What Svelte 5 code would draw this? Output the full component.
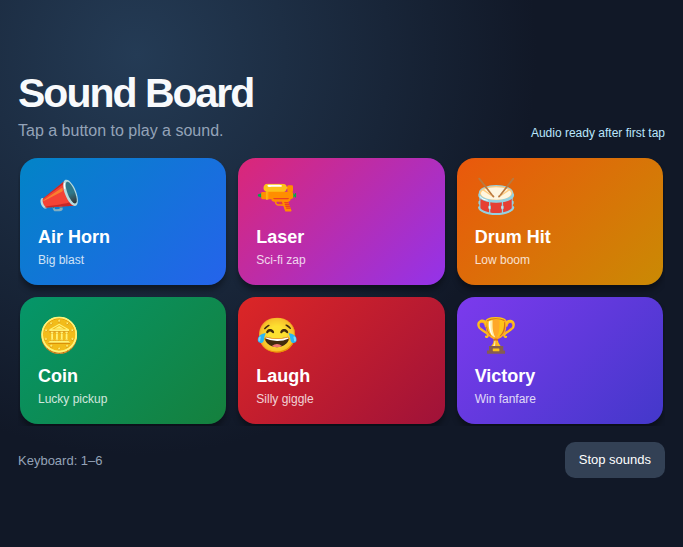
<script lang="ts">
	const sounds = [
		{ id: 'horn', emoji: '📣', name: 'Air Horn', hint: 'Big blast', from: '#0284c7', to: '#2563eb' },
		{ id: 'laser', emoji: '🔫', name: 'Laser', hint: 'Sci-fi zap', from: '#db2777', to: '#9333ea' },
		{ id: 'drum', emoji: '🥁', name: 'Drum Hit', hint: 'Low boom', from: '#ea580c', to: '#ca8a04' },
		{ id: 'coin', emoji: '🪙', name: 'Coin', hint: 'Lucky pickup', from: '#059669', to: '#15803d' },
		{ id: 'laugh', emoji: '😂', name: 'Laugh', hint: 'Silly giggle', from: '#dc2626', to: '#9f1239' },
		{ id: 'victory', emoji: '🏆', name: 'Victory', hint: 'Win fanfare', from: '#7c3aed', to: '#4338ca' }
	];

	// Notes are [frequency, start, length]
	const notes: Record<string, [number, number, number][]> = {
		horn: [[220, 0, 0.6], [277, 0, 0.6]],
		laser: [[1200, 0, 0.08], [700, 0.08, 0.08], [300, 0.16, 0.1]],
		drum: [[90, 0, 0.25]],
		coin: [[988, 0, 0.08], [1319, 0.08, 0.3]],
		laugh: [[520, 0, 0.1], [460, 0.15, 0.1], [400, 0.3, 0.1]],
		victory: [[523, 0, 0.12], [659, 0.14, 0.12], [784, 0.28, 0.4]]
	};

	let status = $state('Audio ready after first tap');
	let audio: AudioContext | null = null;
	let playing: OscillatorNode[] = [];

	function play(sound: (typeof sounds)[number]) {
		audio ??= new AudioContext();
		for (const [frequency, start, length] of notes[sound.id]) {
			const osc = audio.createOscillator();
			const gain = audio.createGain();
			osc.frequency.value = frequency;
			gain.gain.value = 0.15;
			osc.connect(gain).connect(audio.destination);
			osc.start(audio.currentTime + start);
			osc.stop(audio.currentTime + start + length);
			playing.push(osc);
		}
		status = `Playing ${sound.name}`;
	}

	function stopAll() {
		playing.forEach((osc) => osc.stop());
		playing = [];
		status = 'Stopped';
	}

	function handleKey(event: KeyboardEvent) {
		const sound = sounds[Number(event.key) - 1];
		if (sound && !event.repeat) {
			play(sound);
		}
	}
</script>

<svelte:window onkeydown={handleKey} />

<main>
	<div class="board">
		<header>
			<div>
				<h1>Sound Board</h1>
				<p class="subtitle">Tap a button to play a sound.</p>
			</div>
			<p class="status" role="status">{status}</p>
		</header>

		<section class="pads" aria-label="Sounds">
			{#each sounds as sound (sound.id)}
				<button class="pad" style="--from: {sound.from}; --to: {sound.to}" onclick={() => play(sound)}>
					<span class="emoji" aria-hidden="true">{sound.emoji}</span>
					<span class="name">{sound.name}</span>
					<span class="hint">{sound.hint}</span>
				</button>
			{/each}
		</section>

		<footer>
			<span>Keyboard: 1–6</span>
			<button class="stop" onclick={stopAll}>Stop sounds</button>
		</footer>
	</div>
</main>

<style>
	:global(body) {
		margin: 0;
		background: #111827;
	}

	main {
		box-sizing: border-box;
		min-height: 100vh;
		display: flex;
		align-items: center;
		justify-content: center;
		padding: 18px;
		background: radial-gradient(circle at 20% 10%, #243b55 0, #111827 400px);
		color: #f8fafc;
		font-family: "Liberation Sans", Arial, sans-serif;
	}

	.board {
		width: 100%;
		max-width: 900px;
	}

	header {
		display: flex;
		align-items: flex-end;
		justify-content: space-between;
		gap: 16px;
		margin-bottom: 16px;
	}

	h1 {
		margin: 0;
		font-size: 41px;
		line-height: 49px;
		letter-spacing: -2px;
	}

	.subtitle {
		margin: 4px 0 0;
		color: #94a3b8;
		font-size: 16px;
		line-height: 18px;
	}

	.status {
		margin: 0;
		color: #bae6fd;
		font-size: 12px;
		line-height: 14px;
	}

	.pads {
		display: grid;
		grid-template-columns: repeat(3, 1fr);
		gap: 12px;
		padding: 2px;
		overflow: hidden;
	}

	.pad {
		display: flex;
		flex-direction: column;
		align-items: flex-start;
		padding: 18px;
		border: 0;
		border-radius: 18px;
		background: linear-gradient(135deg, var(--from), var(--to));
		box-shadow: 0 6px 6px -1px rgba(0, 0, 0, 0.4);
		color: white;
		font-family: inherit;
		text-align: left;
		cursor: pointer;
	}

	.pad:hover {
		filter: brightness(1.1);
	}

	.emoji {
		font-size: 34px;
		line-height: 40px;
	}

	.name {
		margin-top: 10px;
		font-size: 18px;
		font-weight: 700;
		line-height: 22px;
	}

	.hint {
		margin-top: 5px;
		font-size: 12px;
		line-height: 14px;
		opacity: 0.8;
	}

	footer {
		display: flex;
		align-items: center;
		justify-content: space-between;
		margin-top: 16px;
		color: #94a3b8;
		font-size: 13px;
	}

	.stop {
		padding: 10px 14px;
		border: 0;
		border-radius: 10px;
		background: #334155;
		color: white;
		font-family: inherit;
		font-size: 13px;
		line-height: 16px;
		cursor: pointer;
	}

	@media (max-width: 480px) {
		.pads {
			grid-template-columns: repeat(2, 1fr);
		}
	}
</style>
